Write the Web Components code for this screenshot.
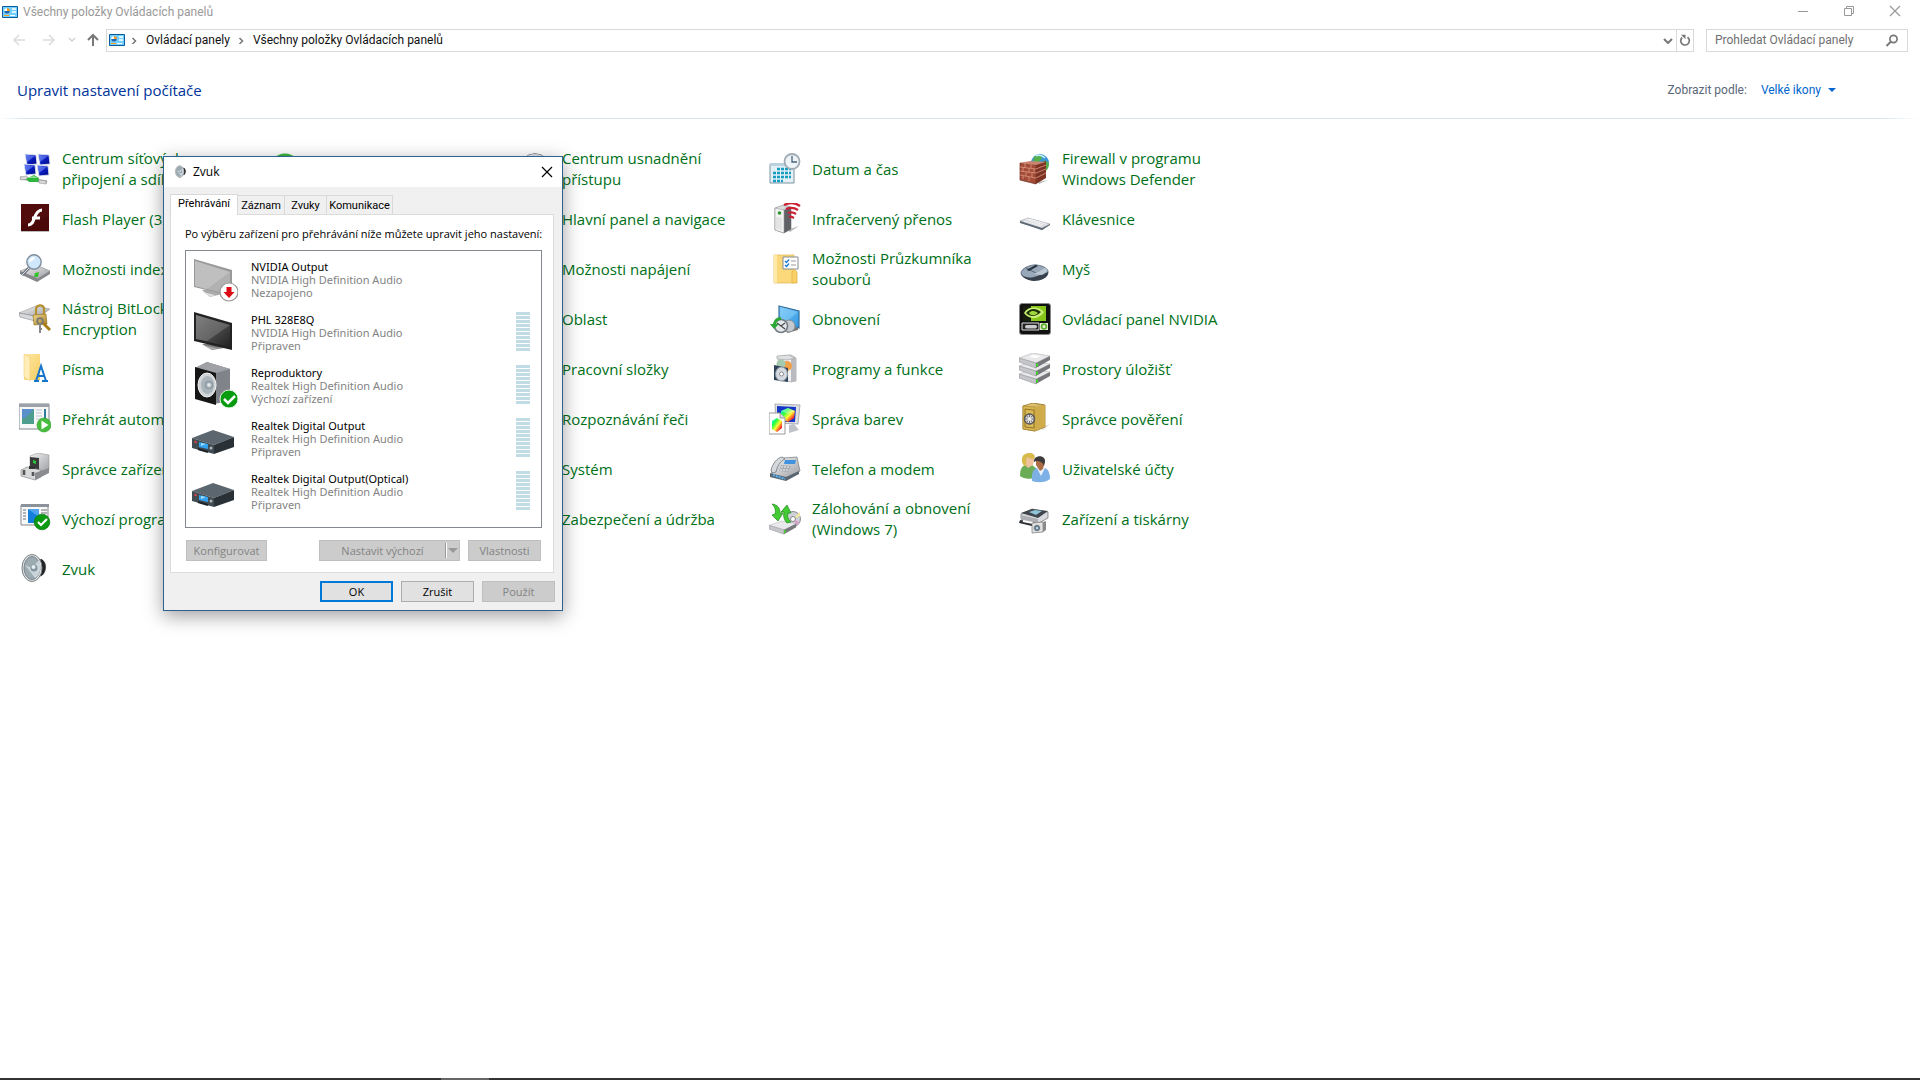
<!DOCTYPE html>
<html lang="cs">
<head>
<meta charset="utf-8">
<title>Všechny položky Ovládacích panelů</title>
<style>
html, body { height: 100%; margin: 0; }
body { background: #fff; color: #000; font: 12px/16px "Open Sans", "Noto Sans", sans-serif; overflow: hidden; --narrow: Roboto, "Open Sans", sans-serif; --wide: "Noto Sans", "Open Sans", sans-serif; }
</style>
</head>
<body>
<control-panel></control-panel>
<script>
const DEFS = `<defs>
<linearGradient id="gr" x1="0" y1="0" x2="1" y2="1"><stop stop-color="#f4f4f5"/><stop offset="1" stop-color="#9c9da2"/></linearGradient>
<linearGradient id="dk" x1="0" y1="0" x2="1" y2="1"><stop stop-color="#777"/><stop offset="1" stop-color="#222"/></linearGradient>
<linearGradient id="bl" x1="0" y1="0" x2="1" y2="1"><stop stop-color="#7cc8f7"/><stop offset="1" stop-color="#2f97e4"/></linearGradient>
<linearGradient id="nv" x1="0" y1="0" x2="1" y2="1"><stop stop-color="#4a6cf0"/><stop offset=".5" stop-color="#0a1ec0"/><stop offset="1" stop-color="#000a80"/></linearGradient>
<linearGradient id="yl" x1="0" y1="0" x2="1" y2="1"><stop stop-color="#ffe9a6"/><stop offset="1" stop-color="#f5cd62"/></linearGradient>
<linearGradient id="gd" x1="0" y1="0" x2="1" y2="1"><stop stop-color="#f0d98a"/><stop offset="1" stop-color="#a8802a"/></linearGradient>
<linearGradient id="gn" x1="0" y1="0" x2="0" y2="1"><stop stop-color="#7be07b"/><stop offset="1" stop-color="#149a1c"/></linearGradient>
<linearGradient id="rb" x1="0" y1="0" x2="1" y2="1"><stop stop-color="#0ff"/><stop offset=".3" stop-color="#2f4"/><stop offset=".55" stop-color="#ff3"/><stop offset=".8" stop-color="#f22"/><stop offset="1" stop-color="#f0c"/></linearGradient>
<radialGradient id="sp"><stop stop-color="#fff"/><stop offset=".5" stop-color="#b9c4ca"/><stop offset="1" stop-color="#7c888f"/></radialGradient>
</defs>`;
const MON = (x, y) => `<path d="M${x} ${y}l11 1 1 9-10 1z" fill="url(#nv)" stroke="#dfe3ee" stroke-width=".9"/><path d="M${x+1} ${y+1}l9 1-8 6z" fill="#8da4ff" opacity=".45"/>`;
const DRIVE = y => `<path d="M0 ${y+5}l14-5 17 3-14 7z" fill="#e9e9eb" stroke="#aaa" stroke-width=".5"/><path d="M0 ${y+5}l17 5v5L0 ${y+9}z" fill="#c5c6ca" stroke="#8c8d92" stroke-width=".5"/><path d="M17 ${y+10}l14-7v4l-14 8z" fill="#77787d"/><path d="M17 ${y+11}l2-1v3l-2 1z" fill="#41d52c"/>`;
const ICONS = {
network: [32, 32, MON(6,1) + MON(19,1) + MON(5,11) + MON(18,12) + `<path d="M1 25l27 4" stroke="#9c9c9c" stroke-width="3"/><path d="M1 24l7-1 1 3-7 1zM20 27l7 1v3l-7-1z" fill="#d9dadd" stroke="#999" stroke-width=".6"/><path d="M7 26l8-4 5 3-1 4-9 0z" fill="#2eb53c"/><path d="M8 25l7-2 4 2z" fill="#8be394"/>`],
flash: [32, 32, `<path d="M2 28h28v1H2z" fill="#bbb"/><path d="M2 1h28v27H2z" fill="#4a0808"/><path d="M2 1h28v12L2 22z" fill="#5a1010" opacity=".5"/><path d="M9 22c4 0 5-3 6-6 2-6 4-9 8-9M13 15h8" fill="none" stroke="#fff" stroke-width="3"/>`],
indexing: [32, 32, `<path d="M1 18l16-6 14 6-13 8z" fill="url(#gr)" stroke="#888" stroke-width=".6"/><path d="M1 18l17 7v4L1 21zM18 26l13-8v3l-13 8z" fill="#86878c"/><path d="M16 20l4-1-1 5-4 0z" fill="#35c42a"/><circle cx="15" cy="9" r="7.200" fill="#cfe7fb" stroke="#7f8c9a" stroke-width="1.400"/><path d="M10 9c0-4 3-5 6-5-1 3-2 4-6 5z" fill="#fff"/><path d="M10 15l-7 7" stroke="#707984" stroke-width="3"/><path d="M10 15l-7 7" stroke="#ddd"/>`],
bitlocker: [32, 32, `<path d="M0 10l17-7 14 3-11 8z" fill="url(#gr)" stroke="#999" stroke-width=".6"/><path d="M0 10l20 4v5L1 14z" fill="#d9dade" stroke="#888" stroke-width=".6"/><path d="M17 12V7c0-6 8-6 8-1v7" fill="none" stroke="#b4902e" stroke-width="2.200"/><path d="M14 12l13-1 1 10-13 1z" fill="url(#gd)" stroke="#8f6a18" stroke-width=".6"/><path d="M24 20l7 7" stroke="#a67c1b" stroke-width="3"/><circle cx="21" cy="18" r="2.800" fill="none" stroke="#777" stroke-width="1.800"/><path d="M21 20v10M21 26h2" stroke="#888" stroke-width="2"/>`],
fonts: [32, 32, `<path d="M5 1h16v26H5z" fill="url(#yl)"/><path d="M5 1l6 3v24l-6-4z" fill="#ffedb8" stroke="#e8c566" stroke-width=".5"/><path d="M15 28h5M23 28h6M17 28l5-15 5 15M18 23h7" fill="none" stroke="#1574cc" stroke-width="2"/>`],
autoplay: [32, 32, `<path d="M0 1h30v25H0z" fill="#f8f8f9" stroke="#80868d"/><path d="M0 1h30v3H0z" fill="#9aa1a9"/><path d="M3 6h12v15H3z" fill="#4e9d8e"/><path d="M3 6h12l-9 9H3z" fill="#5b8fcc"/><path d="M17 7h6M17 10h6M17 13h6M17 16h5" stroke="#bfc6cc"/><path d="M26 6v11" stroke="#2d79a0" stroke-width="2"/><circle cx="25" cy="22" r="7" fill="#46bd3c" stroke="#2c9a29" stroke-width=".6"/><path d="M22.500 17.500v9l7-4.500z" fill="#fff"/>`],
devices: [32, 32, `<path d="M11 3l8-3 11 2v15l-10 3-9-2z" fill="url(#gr)" stroke="#888" stroke-width=".5"/><path d="M11 4l9 1v14l-9-2z" fill="#3a3a3a"/><path d="M14 7l3 1v3l-3-1z" fill="#29c733"/><path d="M2 17l6-3 14 3v7l-6 3-14-4z" fill="#d8d9db" stroke="#777" stroke-width=".6"/><path d="M16 20l14-5v5l-14 7z" fill="#8a8b8f"/><path d="M5 17v5M14 19v4" stroke="#555" stroke-width="2.600"/><path d="M10 13h6v3h-6z" fill="#353535"/>`],
defaults: [32, 32, `<path d="M2 2h27v20H2z" fill="#f8f8f8" stroke="#858a91"/><path d="M2 1h28v3H2z" fill="#8c929a"/><path d="M9 6h11v14H9z" fill="#1580dc"/><path d="M9 6l11 8V6z" fill="#4ea5ee"/><path d="M4 7h3M4 10h3M4 13h3M4 16h3M22 7h6M22 10h6" stroke="#6d7379"/><circle cx="23" cy="19" r="7.800" fill="#0c9a12" stroke="#087a10" stroke-width=".7"/><path d="M19 19l3 3 6-6" fill="none" stroke="#fff" stroke-width="2.200"/>`],
sound: [32, 32, `<path d="M13 2l8 4c8 1 8 14 1 17l-10 6z" fill="#5c5f63"/><path d="M22 6c6 2 5 15 0 17" fill="#222"/><ellipse cx="13" cy="15" rx="10" ry="13.500" fill="#e3e6e8" stroke="#777c80" stroke-width="1"/><ellipse cx="13" cy="15" rx="8" ry="11.500" fill="#9caab2" stroke="#7a858b"/><path d="M6 12l7 3 7-8c3 7 1 16-4 18z" fill="#c9d5da"/><circle cx="15" cy="15" r="3.500" fill="#85959f"/><circle cx="14.500" cy="14" r="2" fill="#e6eff3"/>`],
sync: [32, 32, `<circle cx="16" cy="16" r="15.500" fill="#3fb43d"/><path d="M8 18a8 8 0 0 1 15-5m1 5a8 8 0 0 1-15 4" fill="none" stroke="#fff" stroke-width="3"/>`],
ease: [32, 32, `<circle cx="16" cy="16" r="15.300" fill="#8ba5ce" stroke="#77797d"/><circle cx="16" cy="16" r="14" fill="none" stroke="#e0e4ea" stroke-width="2"/><path d="M10 17h13m-4-4l4 4-4 4" fill="none" stroke="#fff" stroke-width="3"/>`],
date: [32, 32, `<path d="M1 11h24v19H1z" fill="#e3f0f6" stroke="#7b949f"/><path d="M1 10h24v3H1z" fill="#b9d2dd"/><path d="M8 16h14M4 20h18M4 24h18M4 28h10" stroke="#159cc0" stroke-width="2.600" stroke-dasharray="3 1"/><circle cx="23" cy="8.500" r="7.500" fill="#edf3f7" stroke="#9fabb5" stroke-width="1.800"/><path d="M23 3v6h5" fill="none" stroke="#45617a" stroke-width="1.300"/>`],
infrared: [32, 32, `<path d="M18 27l12-4-9 6z" fill="#bbb"/><path d="M6 5l9-3 7 2v22l-7 4-9-3z" fill="url(#gr)" stroke="#777" stroke-width=".6"/><path d="M15 7l7-3v22l-7 4z" fill="#606167"/><path d="M6 5l9 2v23l-9-3z" fill="#f2f2f2" stroke="#999" stroke-width=".6"/><path d="M8 14v12M10 14v12M12 15v12" stroke="#d5d5d5"/><circle cx="10.500" cy="10" r="1.800" fill="#28962a"/><path d="M15 2c6-3 12-2 16 1M17 6c5-2 9-1 12 1M19 10c3-1 5-1 8 1M20 14c2-1 3 0 5 1" fill="none" stroke="#cc2034" stroke-width="2.200"/>`],
folderopts: [32, 32, `<path d="M5 2h20v28H5z" fill="#fbd97a" stroke="#dfb54c" stroke-width=".7"/><path d="M5 2h3v28H5z" fill="#ffe9a8"/><path d="M14 4h15v12H14z" fill="#fff" stroke="#858b91"/><path d="M16 8l1.500 1.500L20 6.500M16 12l1.500 1.500L20 10.500" fill="none" stroke="#1c78cf" stroke-width="1.300"/><path d="M22 8h5M22 12h5" stroke="#999"/><path d="M23 19l2-3 3 3v11h-5z" fill="#fbd065" stroke="#dcb044" stroke-width=".7"/>`],
recovery: [32, 32, `<path d="M10 3l20 5v17l-20-6z" fill="url(#bl)" stroke="#316c9c" stroke-width="1.200"/><path d="M11 4l18 5-11 9-7-2z" fill="#8bd1fa" opacity=".5"/><path d="M17 27l12-3v3l-11 3z" fill="#777"/><circle cx="20" cy="23" r="6" fill="#c3c9ce" stroke="#858d94"/><circle cx="12" cy="23" r="6.500" fill="#e4e8eb" stroke="#727a81" stroke-width="1.600"/><path d="M8 20l4 3 4-3M12 23l4 3" fill="none" stroke="#444" stroke-width="1.100"/><path d="M12 14C7 14 5 17 4 21H1l4 5 5-5H7c1-3 2-4 5-4z" fill="#2aa835"/>`],
programs: [32, 32, `<path d="M10 4l12-2 5 3v23l-5 1-12-4z" fill="#f0f0f2" stroke="#9b9ca1" stroke-width=".7"/><path d="M22 6l5-1v23l-5 1z" fill="#b9bbc1"/><path d="M8 3l12-1 6 3-8 2-10-1z" fill="#dfe0e3" stroke="#999" stroke-width=".6"/><circle cx="18" cy="13" r="5" fill="#f0a24a"/><circle cx="12" cy="11" r="4.500" fill="#a4c9ac"/><path d="M5 12l14 3v14L5 27z" fill="#2d4357"/><ellipse cx="12.500" cy="21" rx="6" ry="7" fill="#d4dadf" stroke="#8e98a1"/><circle cx="12.500" cy="21" r="2" fill="#fff" stroke="#777" stroke-width=".8"/>`],
color: [32, 32, `<path d="M6 1l25 1-2 19-22-1z" fill="#dee0e4" stroke="#999ca3" stroke-width=".8"/><path d="M8 3l19 1-1 15H8z" fill="#1436c4"/><path d="M12 8l7-3 7 3-1 7-6 4-7-3z" fill="url(#rb)"/><path d="M12 8l7-3 7 3-7 3z" fill="#fff" opacity=".35"/><path d="M20 22l5-1 5 6-10 3z" fill="#bfc2c8"/><path d="M0 10h11l5 5v16H0z" fill="#fff" stroke="#999"/><path d="M11 10v5h5" fill="#ddd" stroke="#999"/><path d="M3 18l5-3 5 3v7l-5 4-5-3z" fill="url(#rb)"/>`],
phone: [32, 32, `<path d="M3 19l11-14 14-1 3 14-13 8-15-4z" fill="url(#gr)" stroke="#777c82" stroke-width=".7"/><path d="M2 17C4 10 8 5 13 4l3 2c-5 2-8 8-9 13l-4 1z" fill="#d6d9dc" stroke="#70767c" stroke-width=".8"/><path d="M16 7h11l-1 4H15z" fill="#3f93df"/><path d="M12 12l10 1-3 6-9-1z" fill="#a8adb3"/><path d="M12 14h9M11 17h8" stroke="#f6f6f6" stroke-dasharray="2 1"/><path d="M1 20l16 4 13-6v3l-13 7-16-4z" fill="#596672"/><path d="M4 22l12 4" stroke="#55b8ff" stroke-width="2" stroke-dasharray="2 1"/>`],
backup: [32, 32, `<circle cx="24" cy="16" r="7.500" fill="#ced1d5" stroke="#8c8e93"/><path d="M24 16l3 7 4-4z" fill="#d9a5cf"/><path d="M24 16l7-3V9z" fill="#f3e99f"/><circle cx="24" cy="16" r="2.500" fill="#fff" stroke="#888"/><g transform="translate(0 18) scale(.88)">${DRIVE(0)}</g><path d="M3 1c6 1 8 4 8 9h3l-5 8-6-6 3-1C7 7 6 4 3 1zM18 20c-3-3-4-7-3-11h-3l6-7 4 8h-3c-1 3 0 6 3 9z" fill="#43cb34" stroke="#20861b" stroke-width=".7"/>`],
firewall: [32, 32, `<circle cx="21" cy="10" r="9" fill="#3995d6"/><path d="M15 4c4-3 8-1 8 1l-4 5-5-1zM25 7l5 3c0 6-3 9-6 8l-1-5z" fill="#54b04a"/><path d="M17 3c3-2 7 0 9 2" stroke="#c6f2ff" stroke-width="1.500" fill="none"/><path d="M19 29l10-2-9 4z" fill="#bbb"/><path d="M1 10l16 1v20L1 27z" fill="#a34c38" stroke="#6d2c20" stroke-width=".7"/><path d="M17 11l10-3v17l-10 6z" fill="#7c3324"/><path d="M1 10l10-2 16 1-10 3z" fill="#c98571"/><path d="M1 14l16 2 10-4M1 18l16 2 10-4M1 22l16 3 10-5M6 10v5M12 11v4M4 14v5M10 15v5M15 16v4M7 19v4M13 20v4M4 23v3M10 24v4" fill="none" stroke="#dc9783" stroke-width=".8"/>`],
keyboard: [32, 32, `<path d="M1 18l8-3 22 6-8 6z" fill="#d9dbde" stroke="#9aa0a6" stroke-width=".6"/><path d="M1 18l22 7 8-4v1l-8 5L1 20z" fill="#5d6974"/><path d="M7 16l17 6M10 16l17 5M5 18l17 5" stroke="#f6f6f6" stroke-width="1.200" stroke-dasharray="2 .6"/>`],
mouse: [32, 32, `<path d="M2 20c0-5 11-9 16-8 7 1 12 4 11 8-1 5-9 7-14 7-6 0-13-3-13-7z" fill="#98a8b8" stroke="#526273" stroke-width=".8"/><path d="M2 21c4 4 9 4 13 3 7-2 11-4 14-5 1 6-8 9-14 9-6 0-12-4-13-7z" fill="#38424f"/><path d="M7 15l10 5M17 12L8 17" stroke="#536475"/><path d="M8 17l9-5 2 1-9 5z" fill="#26303a"/><path d="M14 21c5-1 10-5 12-6 4 2 2 4-3 7z" fill="#bcc8d3"/>`],
nvidia: [32, 32, `<rect x=".5" y=".5" width="31" height="31" rx="2.500" fill="#111" stroke="#888"/><path d="M4 3h23v15H4z" fill="#171f0c"/><path d="M12 3h15v15H12z" fill="#86c61a"/><path d="M5 10c4-7 14-7 20-1-5 8-15 8-20 1z" fill="#c9f177"/><path d="M7 10c4-5 10-5 15-1-5 5-11 5-15 1z" fill="#1d3008"/><path d="M10 10c3-3 6-2 9 0-3 3-7 3-9 0z" fill="#9fd83c"/><path d="M3 20h17v7H3z" fill="#222" stroke="#ddd"/><rect x="6" y="22" width="12" height="3.500" rx="1.700" fill="#ccc"/><path d="M21 20h8v7h-8z" fill="#e8eee0"/><circle cx="25" cy="23.500" r="2.400" fill="none" stroke="#62b02b" stroke-width="1.800"/>`],
storage: [32, 32, DRIVE(16) + DRIVE(8) + DRIVE(0) + `<path d="M14 2l8 1-5 2-7-1z" fill="#fff"/>`],
credentials: [32, 32, `<path d="M20 25l11-4-7 6z" fill="#ddd"/><path d="M4 3l10-3 12 2v22l-10 4-12-2z" fill="url(#gd)" stroke="#8f6d1d" stroke-width=".8"/><path d="M4 3l12 1v24L4 26z" fill="#d9b957" stroke="#9c7826" stroke-width=".6"/><path d="M16 4l10-2v22l-10 4z" fill="#cfab4a"/><path d="M6 6l9 1v18l-9-1z" fill="none" stroke="#94721f"/><circle cx="10.500" cy="16" r="5" fill="#ddd" stroke="#555" stroke-width="1.500"/><path d="M5 16h11M10.500 10v12M7 12l7 8M14 12l-7 8" stroke="#6b6b6b"/><circle cx="10.500" cy="16" r="2" fill="#eee"/>`],
users: [32, 32, `<path d="M1 23c0-7 2-11 7-11h5l5 4-1 8c-6 3-12 2-16-1z" fill="#6cac57"/><path d="M6 3c2-4 8-4 10 0l-2 9-5 3-4-5z" fill="#efc29d"/><path d="M3 8C2 2 7 0 10 0c6 0 6 4 5 6-3 0-5-1-7-2-1 3-1 8-1 9-2 0-4-2-4-5z" fill="#d7bb4b"/><path d="M13 28c-1-9 2-13 6-13h6c4 0 6 5 6 11-5 4-12 4-18 2z" fill="#7db0e4"/><path d="M18 15l4 8 4-8z" fill="#e9f3fd"/><path d="M17 7c1-4 9-4 9 1l-2 8-3 2-4-6z" fill="#ab6c46"/><path d="M15 9c-1-7 11-8 11-1l-1 5c-1-3-3-5-8-5z" fill="#3c3b3c"/>`],
printer: [32, 32, `<path d="M2 11l11-5 16 3v6l-11 6-16-5z" fill="#d8dadd" stroke="#555" stroke-width=".6"/><path d="M2 10l11-4 16 2-10 7z" fill="#3f454b"/><path d="M10 9l6-2 7 1-6 4z" fill="#8fc4d8"/><path d="M2 12l17 4v6L2 18z" fill="#acaeb2"/><path d="M1 17l16 3v4L0 20z" fill="#303438"/><path d="M4 18l10 2" stroke="#fff" stroke-width="2"/><path d="M13 20l11-1v10l-11 1z" fill="#e3e4e5" stroke="#777" stroke-width=".7"/><circle cx="18" cy="25" r="3.500" fill="#58646e" stroke="#ddd"/><circle cx="18" cy="25" r="1.500" fill="#a8d4ef"/><path d="M24 19l3-1v9l-3 2z" fill="#8b8b8b"/>`],
panel: [16, 12, `<path d="M.5.500h15v11H.5z" fill="#74d0ff" stroke="#0b5aa0"/><circle cx="5" cy="5" r="2.800" fill="#fff"/><path d="M5 5V2.200a2.800 2.800 0 1 1-2.800 2.800z" fill="#1b67b1"/><path d="M5 5h2.800A2.800 2.800 0 0 0 5 2.200z" fill="#ff9d1e"/><path d="M10 3h4M10 6h4" stroke="#fff" stroke-width="1.500"/><path d="M2 9.500h5" stroke="#ff9d1e"/><path d="M8 9.500h5" stroke="#fff"/>`],
tv: [48, 48, `<path d="M12 36l14-1 8 5-12 2z" fill="#777"/><path d="M13 37l13 3 7-1-11 3z" fill="#aaa"/><path d="M4 4l38 11v27L4 33z" fill="#222"/><path d="M6 7l34 10v22L6 31z" fill="url(#dk)"/><path d="M6 7l34 10-23 16-11-2z" fill="#8a8a8a" opacity=".45"/>`],
tvoff: [48, 48, `<path d="M12 35l14-1 6 5-12 3z" fill="#aaa"/><path d="M13 37l12 3-4 2z" fill="#ddd"/><path d="M4 4l38 11v26L4 32z" fill="#999"/><path d="M5 6l35 11v23L5 31z" fill="#b1b1b1"/><path d="M5 6l35 11-23 17-12-3z" fill="#bfbfbf"/><circle cx="39" cy="37" r="9" fill="#fff" stroke="#999" stroke-width="1.200"/><path d="M36.500 32h5v5h3L39 43l-5.500-6h3z" fill="#dc0a15"/>`],
speaker: [48, 48, `<path d="M5 7l12-6 23 7v31l-15 4z" fill="#80838a"/><path d="M5 7l12-6 23 7-14 4z" fill="#9fa1a6"/><path d="M5 6l21 6v32L5 38z" fill="#161616"/><ellipse cx="17" cy="24" rx="9" ry="12" fill="#cfd4d7" stroke="#f4f4f4"/><ellipse cx="17.500" cy="24" rx="6.500" ry="9" fill="#a9b3ba"/><circle cx="19" cy="24" r="4" fill="url(#sp)"/><circle cx="39" cy="38" r="9" fill="#089b0f" stroke="#dff4df"/><path d="M34 38l4 4 7-7" fill="none" stroke="#fff" stroke-width="2.500"/>`],
receiver: [48, 48, `<path d="M2 24l21-8 21 7-20 8z" fill="#5b666e"/><path d="M2 24l22 7v9L2 34z" fill="#414b52"/><path d="M24 31l20-8v10l-20 7z" fill="#293137"/><path d="M9 28l9 2v5l-9-2z" fill="#34a2ee"/><path d="M11 29l5 1-5 2z" fill="#9cddff"/><path d="M8 35l10 3" stroke="#1c2328" stroke-width="2"/><circle cx="5.500" cy="28" r="1.300" fill="#d1444d"/><circle cx="21" cy="34" r="1.500" fill="#adb6bb"/>`],
back: [16, 16, `<path d="M14 8H3m5-5L3 8l5 5" fill="none" stroke="#dcdcdc" stroke-width="1.600"/>`],
forward: [16, 16, `<path d="M2 8h11M8 3l5 5-5 5" fill="none" stroke="#dcdcdc" stroke-width="1.600"/>`],
recent: [8, 8, `<path d="M1 2l3 3 3-3" fill="none" stroke="#d0d0d0" stroke-width="1.400"/>`],
up: [16, 16, `<path d="M8 14V3M3 8l5-5 5 5" fill="none" stroke="#777" stroke-width="2"/>`],
chevron: [8, 8, `<path d="M2.500 2l3 3-3 3" fill="none" stroke="#777" stroke-width="1.500"/>`],
down: [10, 8, `<path d="M1 3l4 4 4-4" fill="none" stroke="#777" stroke-width="2"/>`],
refresh: [14, 14, `<path d="M9.500 4.200A4.300 4.300 0 1 1 4.200 4.500" fill="none" stroke="#777" stroke-width="1.700"/><path d="M3 1.800h4.500v4.500z" fill="#777"/>`],
search: [14, 14, `<circle cx="8.500" cy="6" r="3.600" fill="none" stroke="#777" stroke-width="1.700"/><path d="M6 8.500L1.500 13" stroke="#777" stroke-width="2"/>`],
minimize: [12, 12, `<path d="M1 6.500h10" stroke="#999"/>`],
restore: [12, 12, `<path d="M1.500 3.500h7v7h-7zM3.500 3.500v-2h7v7h-2" fill="none" stroke="#999"/>`],
close: [12, 12, `<path d="M1 1l10 10M11 1L1 11" stroke="var(--ink,#999)" stroke-width="1.200"/>`],
triangle: [8, 4, `<path d="M0 0h8L4 4z" fill="#06c"/>`]
};
const define = (name, template) => customElements.define(name, class extends HTMLElement {
  connectedCallback() {
    if (this.shadowRoot) return;
    const holder = document.createElement("template");
    holder.innerHTML = typeof template === "function" ? template(this) : template;
    this.attachShadow({ mode: "open" }).append(holder.content.cloneNode(true));
  }
});

define("ui-icon", el => {
  const [w, h, body] = ICONS[el.getAttribute("name")];
  const s = Number(el.getAttribute("size")) || w;
  return `<style>:host{display:block;flex:none}svg{display:block}</style>
  <svg width="${s}" height="${s * h / w}" viewBox="0 0 ${w} ${h}" aria-hidden="true">${DEFS}${body}</svg>`;
});

define("window-title", `<style>
:host{display:flex;align-items:center;height:24px;padding:0 2px;color:#999;font-family:var(--narrow)}
.t{flex:1;margin-left:5px}
button{border:0;background:none;padding:0 0 2px;width:46px;height:22px;display:grid;place-items:center}
</style><ui-icon name="panel"></ui-icon><span class="t"><slot></slot></span>
<button aria-label="Minimalizovat"><ui-icon name="minimize"></ui-icon></button>
<button aria-label="Obnovit"><ui-icon name="restore"></ui-icon></button>
<button aria-label="Zavřít"><ui-icon name="close"></ui-icon></button>`);

define("address-bar", `<style>
:host{display:flex;align-items:center;height:32px;padding:0 12px 0 11px;font-family:var(--narrow)}
button{border:0;background:none;padding:0;display:grid;place-items:center;height:22px}
.b{width:16px;margin-right:7px}.h{width:30px}.r{width:16px}.u{width:26px}
nav,.find{box-sizing:border-box;height:23px;border:1px solid #d9d9d9;display:flex;align-items:center}
nav{flex:1;padding-left:2px;margin-right:12px}
nav ui-icon{margin-right:5px} nav>ui-icon[name=chevron]{margin:0 8px 0 0}
a{color:#111;text-decoration:none;margin-right:7px}
nav button{width:17px}nav button ui-icon{margin:0}.fill{flex:1}
.ref{border-left:1px solid #d9d9d9}
.find{width:202px;padding:0 8px}
input{flex:1;min-width:0;border:0;outline:0;padding:0;font:inherit;color:#666;background:none}
input::placeholder{color:#707070;opacity:1}
</style>
<button class="b" aria-label="Zpět"><ui-icon name="back"></ui-icon></button>
<button class="h" aria-label="Vpřed"><ui-icon name="forward"></ui-icon></button>
<button class="r" aria-label="Poslední umístění"><ui-icon name="recent"></ui-icon></button>
<button class="u" aria-label="Nahoru"><ui-icon name="up"></ui-icon></button>
<nav><ui-icon name="panel"></ui-icon><ui-icon name="chevron"></ui-icon><a href="#">Ovládací panely</a><ui-icon name="chevron"></ui-icon><a href="#">Všechny položky Ovládacích panelů</a><span class="fill"></span>
<button aria-label="Předchozí umístění"><ui-icon name="down"></ui-icon></button><button class="ref" aria-label="Aktualizovat"><ui-icon name="refresh"></ui-icon></button></nav>
<label class="find"><input type="text" aria-label="Prohledat" placeholder="Prohledat Ovládací panely"><ui-icon name="search"></ui-icon></label>`);

define("view-header", `<style>
:host{display:flex;align-items:center;box-sizing:border-box;height:63px;padding:4px 84px 0 17px;
background:linear-gradient(90deg,transparent,#d5e6f1 24px,#d5e6f1 calc(100% - 40px),transparent) bottom/100% 1px no-repeat}
h1{font-size:15px;line-height:20px;font-weight:400;color:#039;margin:0;flex:1}
.l{color:#5a6779;margin-right:14px;font-family:var(--narrow)}
button{border:0;background:none;padding:0;font:inherit;font-family:var(--narrow);color:#06c;display:flex;align-items:center;gap:7px}
</style><h1><slot></slot></h1><span class="l">Zobrazit podle:</span><button>Velké ikony<ui-icon name="triangle"></ui-icon></button>`);

define("panel-item", el => `<style>
:host{display:flex;align-items:center;height:50px}
a{display:flex;align-items:center;gap:11px;color:#007018;text-decoration:none;font-size:15px;line-height:21px}
span{max-width:176px}
</style><a href="#"><ui-icon name="${el.getAttribute("icon")}"></ui-icon><span><slot></slot></span></a>`);

define("level-meter", `<style>:host{display:block;width:14px;height:39px;background:repeating-linear-gradient(#c1dce4 0 3px,transparent 3px 4px)}</style>`);

define("audio-device", el => `<style>
:host{display:flex;align-items:center;height:53px;padding:0 11px 0 4px}
.t{flex:1;margin-left:13px;padding-top:2px;line-height:13px;color:#838383;font-family:var(--wide)}
b{display:block;font-weight:400;color:#000}
</style><ui-icon name="${el.getAttribute("icon")}"></ui-icon><div class="t"><b><slot></slot></b><slot name="driver"></slot><br><slot name="state"></slot></div>${el.hasAttribute("active") ? "<level-meter></level-meter>" : ""}`);

define("push-button", el => `<style>
:host{display:block;width:73px}
button{box-sizing:border-box;width:100%;height:21px;padding:0;border:1px solid #adadad;background:#e1e1e1;color:#000;font:inherit;display:flex;align-items:center;justify-content:center}
:host([primary]) button{border:2px solid #0078d7}
button:disabled{background:#ccc;border-color:#bfbfbf;color:#838383}
:host([wide]){width:81px}:host([split]){width:141px}
.s{display:none}:host([split]) .s{display:flex;align-items:center;width:13px;height:15px;border-left:1px solid #999;box-shadow:inset 1px 0 #fff}
:host([split]) .c{flex:1}
i{border:5px solid transparent;border-top-color:#999;border-bottom:0;margin-left:2px}
</style><button ${el.hasAttribute("off") ? "disabled" : ""}><span class="c"><slot></slot></span><span class="s"><i></i></span></button>`);

define("sound-dialog", `<style>
:host{display:block;box-sizing:border-box;width:400px;border:1px solid #2b628f;background:#f0f0f0;font-size:11px;line-height:15px;box-shadow:0 5px 18px rgba(0,0,0,.38)}
header{display:flex;align-items:center;height:30px;background:#fff;padding-left:10px;font-size:12px}
header span{flex:1;margin-left:5px;padding-bottom:1px}
header button{border:0;background:none;width:30px;height:30px;padding:0;display:grid;place-items:center;--ink:#000}
.tabs{display:flex;align-items:flex-end;padding:7px 6px 0;height:20px}
.tabs button{box-sizing:border-box;height:19px;border:1px solid #d9d9d9;border-left-width:0;border-bottom:0;background:#f0f0f0;font:inherit;font-family:var(--narrow);color:#000;padding:0;width:42px;white-space:nowrap}
.tabs .w{width:47px}.tabs .x{width:66px}
.tabs [aria-selected=true]{width:68px;height:21px;background:#fff;border-left-width:1px;margin-bottom:-1px;padding-bottom:4px;position:relative}
.page{margin:0 8px 0 6px;border:1px solid #dcdcdc;background:#fff;padding:11px 11px 11px 14px}
p{margin:0 0 9px;white-space:nowrap}
.list{border:1px solid #828790;height:275px;padding-top:1px}
.row{display:flex;gap:8px;padding:12px 1px 0 1px}.row :first-child{margin-right:auto}
footer{display:flex;justify-content:flex-end;gap:8px;padding:8px 7px 8px}
</style>
<header><ui-icon name="sound" size="14"></ui-icon><span>Zvuk</span><button aria-label="Zavřít"><ui-icon name="close"></ui-icon></button></header>
<div class="tabs" role="tablist"><button role="tab" aria-selected="true">Přehrávání</button><button role="tab" class="w">Záznam</button><button role="tab">Zvuky</button><button role="tab" class="x">Komunikace</button></div>
<div class="page"><p>Po výběru zařízení pro přehrávání níže můžete upravit jeho nastavení:</p>
<div class="list"><slot></slot></div>
<div class="row"><push-button wide off>Konfigurovat</push-button><push-button split off>Nastavit výchozí</push-button><push-button off>Vlastnosti</push-button></div></div>
<footer><push-button primary>OK</push-button><push-button>Zrušit</push-button><push-button off>Použít</push-button></footer>`);

const ITEMS = [
["network","Centrum síťových připojení a sdílení"],["sync",""],["ease","Centrum usnadnění přístupu"],["date","Datum a čas"],["firewall","Firewall v programu Windows Defender"],
["flash","Flash Player (32bitový)"],null,["","Hlavní panel a navigace"],["infrared","Infračervený přenos"],["keyboard","Klávesnice"],
["indexing","Možnosti indexování"],null,["","Možnosti napájení"],["folderopts","Možnosti Průzkumníka souborů"],["mouse","Myš"],
["bitlocker","Nástroj BitLocker Drive Encryption"],null,["","Oblast"],["recovery","Obnovení"],["nvidia","Ovládací panel NVIDIA"],
["fonts","Písma"],null,["","Pracovní složky"],["programs","Programy a funkce"],["storage","Prostory úložišť"],
["autoplay","Přehrát automaticky"],null,["","Rozpoznávání řeči"],["color","Správa barev"],["credentials","Správce pověření"],
["devices","Správce zařízení"],null,["","Systém"],["phone","Telefon a modem"],["users","Uživatelské účty"],
["defaults","Výchozí programy"],null,["","Zabezpečení a údržba"],["backup","Zálohování a obnovení (Windows 7)"],["printer","Zařízení a tiskárny"],
["sound","Zvuk"]];
const DEVICES = [["tvoff","NVIDIA Output","NVIDIA High Definition Audio","Nezapojeno",0],["tv","PHL 328E8Q","NVIDIA High Definition Audio","Připraven",1],["speaker","Reproduktory","Realtek High Definition Audio","Výchozí zařízení",1],["receiver","Realtek Digital Output","Realtek High Definition Audio","Připraven",1],["receiver","Realtek Digital Output(Optical)","Realtek High Definition Audio","Připraven",1]];

define("task-strip", `<style>:host{display:flex;height:2px;background:#333}i{width:48px;margin-left:441px;background:#666}</style><i></i>`);

define("control-panel", `<style>
:host{display:flex;flex-direction:column;height:100vh;position:relative}
main{flex:1;padding:25px 0 0 19px}
.grid{display:grid;grid-template-columns:repeat(5,250px)}
sound-dialog{position:absolute;left:163px;top:156px}
</style>
<window-title>Všechny položky Ovládacích panelů</window-title>
<address-bar></address-bar>
<view-header>Upravit nastavení počítače</view-header>
<main><div class="grid">${ITEMS.map(i => i ? `<panel-item icon="${i[0] || "ease"}">${i[1]}</panel-item>` : "<div></div>").join("")}</div></main>
<task-strip></task-strip>
<sound-dialog>${DEVICES.map(d => `<audio-device icon="${d[0]}" ${d[4] ? "active" : ""}>${d[1]}<span slot="driver">${d[2]}</span><span slot="state">${d[3]}</span></audio-device>`).join("")}</sound-dialog>`);
</script>
</body>
</html>
